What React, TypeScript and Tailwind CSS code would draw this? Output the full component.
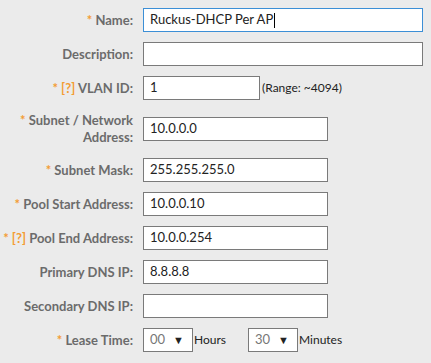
import type { ReactNode } from 'react';

const labelFont = { fontFamily: 'Lato, "Noto Sans", sans-serif' };
const inputFont = { fontFamily: 'Lato, "Noto Sans", sans-serif' };

function Req() {
  return <span className="text-[#f39c33]">* </span>;
}

function Help() {
  return <span className="text-[#f39c33]">[?] </span>;
}

interface RowProps {
  label: ReactNode;
  children: ReactNode;
  tall?: boolean;
}

function Row({ label, children, tall }: RowProps) {
  return (
    <div className={['flex items-center gap-[10px]', tall ? 'h-[38px]' : 'h-6'].join(' ')}>
      <div
        className="w-[133px] shrink-0 text-right text-[13px] font-bold leading-[17px] text-[#6b6b6b]"
        style={labelFont}
      >
        {label}
      </div>
      {children}
    </div>
  );
}

function TextBox({ value = '', width, focused }: { value?: string; width: string; focused?: boolean }) {
  return (
    <div
      className={[
        'flex h-6 items-center bg-white px-[6px] text-[13px] text-[#222]',
        focused ? 'border border-[#3c8fd6]' : 'border border-[#7a7a7a]',
        width,
      ].join(' ')}
      style={inputFont}
    >
      {value}
      {focused && <span className="ml-px inline-block h-[15px] w-px bg-black" />}
    </div>
  );
}

function Select({ value }: { value: string }) {
  return (
    <div
      className="flex h-6 w-[50px] items-center justify-between border border-[#7a7a7a] bg-white pl-[6px] pr-[8px] text-[13px] text-[#777]"
      style={inputFont}
    >
      <span>{value}</span>
      <span className="text-[11px] text-[#222]">▼</span>
    </div>
  );
}

export default function App() {
  return (
    <div className="h-[363px] w-[431px] bg-[#ebebeb] pt-2">
      <div className="flex flex-col gap-[10px]">
        <Row label={<><Req />Name:</>}>
          <TextBox value="Ruckus-DHCP Per AP" width="w-[280px]" focused />
        </Row>
        <Row label="Description:">
          <TextBox width="w-[280px]" />
        </Row>
        <Row label={<><Req /><Help />VLAN ID:</>}>
          <div className="flex items-center">
            <TextBox value="1" width="w-[117px]" />
            <span className="ml-[2px] text-[12px] text-[#222]" style={inputFont}>
              (Range: ~4094)
            </span>
          </div>
        </Row>
        <Row tall label={<><Req />Subnet / Network Address:</>}>
          <TextBox value="10.0.0.0" width="w-[185px]" />
        </Row>
        <Row label={<><Req />Subnet Mask:</>}>
          <TextBox value="255.255.255.0" width="w-[185px]" />
        </Row>
        <Row label={<><Req />Pool Start Address:</>}>
          <TextBox value="10.0.0.10" width="w-[185px]" />
        </Row>
        <Row label={<><Req /><Help />Pool End Address:</>}>
          <TextBox value="10.0.0.254" width="w-[185px]" />
        </Row>
        <Row label="Primary DNS IP:">
          <TextBox value="8.8.8.8" width="w-[185px]" />
        </Row>
        <Row label="Secondary DNS IP:">
          <TextBox width="w-[185px]" />
        </Row>
        <Row label={<><Req />Lease Time:</>}>
          <div className="flex items-center text-[12px] text-[#222]" style={inputFont}>
            <Select value="00" />
            <span className="w-[55px] pl-px">Hours</span>
            <Select value="30" />
            <span className="pl-px">Minutes</span>
          </div>
        </Row>
      </div>
    </div>
  );
}
